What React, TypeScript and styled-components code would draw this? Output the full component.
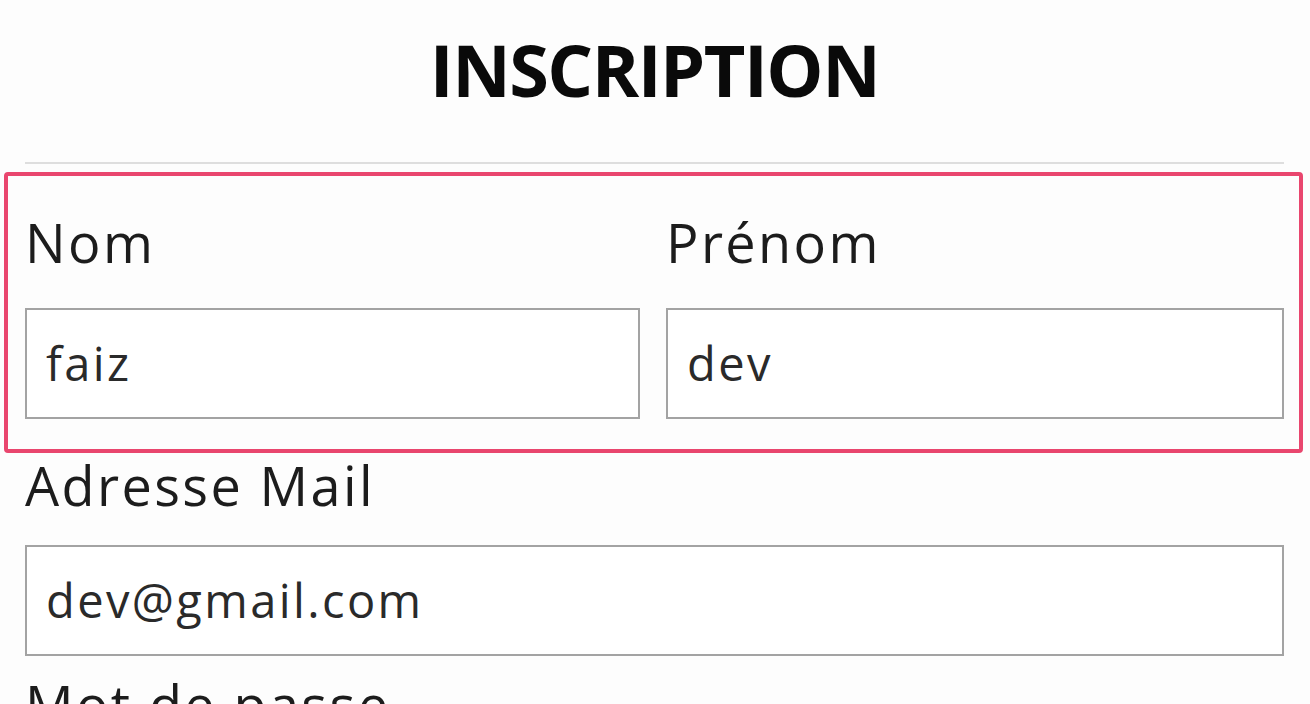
import React from "react";
import styled, { createGlobalStyle } from "styled-components";

const Global = createGlobalStyle`
  html, body { margin: 0; padding: 0; background: #fdfdfd; }
  body { font-family: "Open Sans", "Noto Sans", sans-serif; color: #1f1f1f; overflow: hidden; }
  * { box-sizing: border-box; }
`;

const Page = styled.div`
  width: 1310px;
  height: 704px;
  padding: 0 26px 0 25px;
  overflow: hidden;
`;

const Header = styled.header`
  height: 164px;
  display: flex;
  align-items: flex-start;
  justify-content: center;
  padding-top: 24px;
  border-bottom: 2px solid #dedede;
`;

const Title = styled.h1`
  margin: 0;
  font-size: 72px;
  line-height: 90px;
  font-weight: 700;
  color: #0a0a0a;
  letter-spacing: -1.5px;
`;

const HighlightRow = styled.div`
  margin: 8px -19px 0 -21px;
  border: 4px solid #e9466e;
  border-radius: 4px;
  padding: 0 15px 30px 17px;
  display: grid;
  grid-template-columns: 615px 618px;
  column-gap: 26px;
`;

const Field = styled.div`
  display: flex;
  flex-direction: column;
`;

const Label = styled.label<{ $top: number; $h: number }>`
  display: block;
  font-size: 54px;
  line-height: 64px;
  font-weight: 400;
  letter-spacing: 2.4px;
  color: #1c1c1c;
  margin-top: ${(p) => p.$top}px;
  height: ${(p) => p.$h}px;
`;

const Input = styled.div`
  height: 111px;
  border: 2px solid #a3a3a3;
  background: #fff;
  padding-left: 19px;
  padding-bottom: 2px;
  display: flex;
  align-items: center;
  font-size: 47px;
  letter-spacing: 2.4px;
  color: #2a2a2a;
`;

const Block = styled.div`
  display: flex;
  flex-direction: column;
`;

export default function App() {
  return (
    <>
      <Global />
      <Page>
        <Header>
          <Title>INSCRIPTION</Title>
        </Header>
        <HighlightRow>
          <Field>
            <Label $top={34} $h={98}>Nom</Label>
            <Input>faiz</Input>
          </Field>
          <Field>
            <Label $top={34} $h={98}>Prénom</Label>
            <Input>dev</Input>
          </Field>
        </HighlightRow>
        <Block>
          <Label $top={0} $h={92}>Adresse Mail</Label>
          <Input>dev@gmail.com</Input>
          <Label $top={16} $h={64}>Mot de passe</Label>
        </Block>
      </Page>
    </>
  );
}
